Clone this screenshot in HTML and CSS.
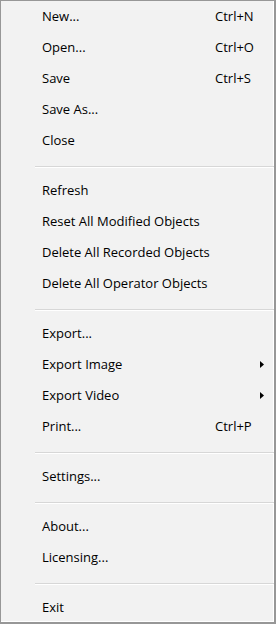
FILE: index.html
```html
<!DOCTYPE html>
<html>
<head>
    <meta charset="UTF-8">
    <title>File menu</title>
    <link rel="stylesheet" href="styles.css">
</head>
<body>
    <div class="menu">
        <div class="item"><span class="label">New...</span><span class="key">Ctrl+N</span></div>
        <div class="item"><span class="label">Open...</span><span class="key">Ctrl+O</span></div>
        <div class="item"><span class="label">Save</span><span class="key">Ctrl+S</span></div>
        <div class="item"><span class="label">Save As...</span></div>
        <div class="item"><span class="label">Close</span></div>
        <div class="sep"></div>
        <div class="item"><span class="label">Refresh</span></div>
        <div class="item"><span class="label">Reset All Modified Objects</span></div>
        <div class="item"><span class="label">Delete All Recorded Objects</span></div>
        <div class="item"><span class="label">Delete All Operator Objects</span></div>
        <div class="sep"></div>
        <div class="item"><span class="label">Export...</span></div>
        <div class="item">
            <span class="label">Export Image</span>
            <span class="arrow"><svg width="4" height="7" viewBox="0 0 4 7"><path d="M0 0L4 3.5L0 7Z" fill="#000"/></svg></span>
        </div>
        <div class="item">
            <span class="label">Export Video</span>
            <span class="arrow"><svg width="4" height="7" viewBox="0 0 4 7"><path d="M0 0L4 3.5L0 7Z" fill="#000"/></svg></span>
        </div>
        <div class="item"><span class="label">Print...</span><span class="key">Ctrl+P</span></div>
        <div class="sep"></div>
        <div class="item"><span class="label">Settings...</span></div>
        <div class="sep"></div>
        <div class="item"><span class="label">About...</span></div>
        <div class="item"><span class="label">Licensing...</span></div>
        <div class="sep"></div>
        <div class="item"><span class="label">Exit</span></div>
    </div>
</body>
</html>
```

FILE: styles.css
```css
body {
    margin: 0;
    font-family: "Open Sans", "Noto Sans", sans-serif;
    font-size: 13px;
    color: #000;
}

.menu {
    box-sizing: border-box;
    width: 276px;
    height: 624px;
    background: #f2f2f2;
    border: 1px solid #979797;
    border-right-width: 2px;
    border-bottom-width: 2px;
    box-shadow: inset -1px -1px #fff;
}

.item {
    box-sizing: border-box;
    display: grid;
    grid-template-columns: 1fr 45px 14px;
    align-items: center;
    height: 31px;
    padding-left: 41px;
    padding-bottom: 1px;
}

.key {
    grid-column: 2;
}

.arrow {
    grid-column: 3;
    display: flex;
}

.sep {
    height: 19px;
    margin-left: 34px;
    position: relative;
}

.sep::after {
    content: "";
    position: absolute;
    left: 0;
    right: 0;
    top: 10px;
    border-top: 1px solid #d7d7d7;
    border-bottom: 1px solid #fff;
}
```
